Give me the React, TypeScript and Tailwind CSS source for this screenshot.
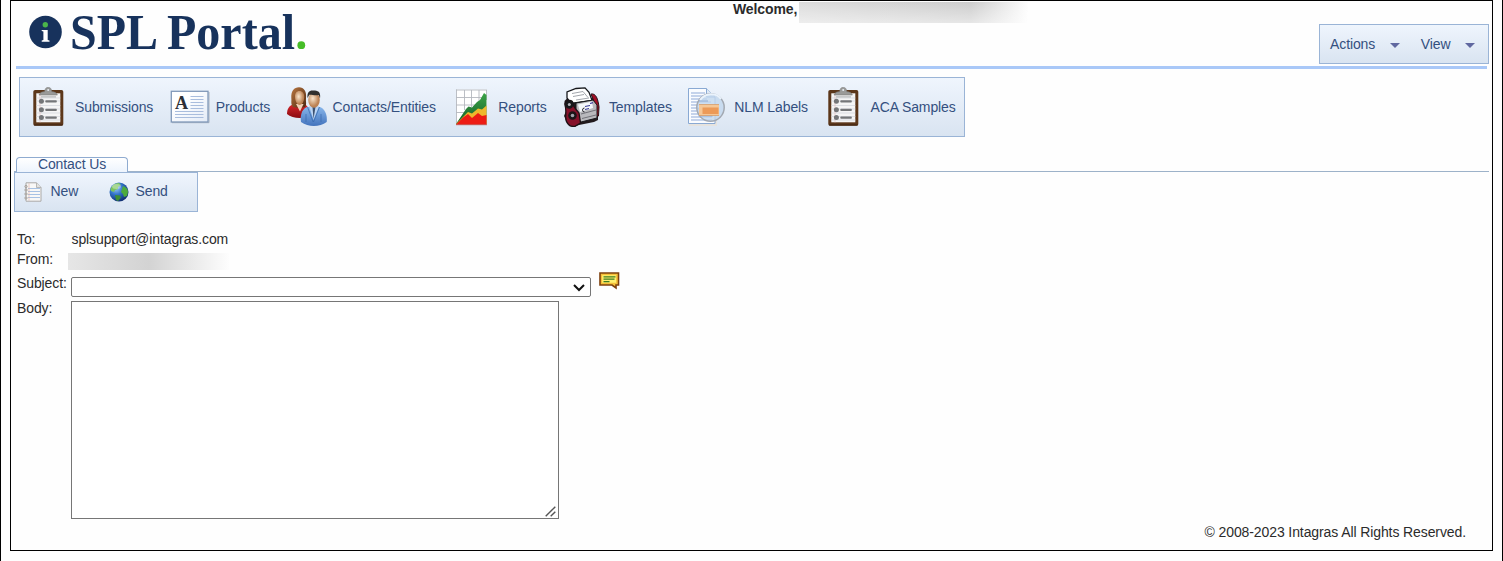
import type { ReactNode } from "react";

function Logo() {
  return (
    <svg className="ml-4 h-[60px] w-[284px] shrink-0" viewBox="27 1 284 60">
      <circle cx="45.5" cy="32" r="16.3" fill="#17325c" />
      <circle cx="45.3" cy="24.8" r="2.7" fill="#4bb54a" />
      <path d="M41.7 30h6v10l1.8.5v1.2h-7.8v-1.2l1.7-.5v-8.4l-1.7-.5z" fill="#fff" />
      <g fill="#17325c" fontFamily="'Liberation Serif', serif" fontWeight="700" fontSize="50" letterSpacing="0">
        <text x="70" y="48.5" textLength="88" lengthAdjust="spacingAndGlyphs">SPL</text>
        <text x="167" y="48.5" textLength="128" lengthAdjust="spacingAndGlyphs">Portal</text>
      </g>
      <circle cx="301.3" cy="45.2" r="3.9" fill="#46bd27" />
    </svg>
  );
}

function ClipboardIcon() {
  return (
    <svg className="size-10 shrink-0" viewBox="0 0 40 40">
      <rect x="4.3" y="3" width="30" height="35.7" rx="1.8" fill="#5c371a" />
      <path d="M5 38h28.6" stroke="#3d2310" />
      <rect x="7.3" y="6.3" width="24" height="29" fill="#f5f5f5" />
      <path d="M7.3 11h24M7.3 14h24M7.3 18.5h24M7.3 22h24M7.3 26h24M7.3 29.5h24M7.3 33h24" stroke="#d3d6dc" strokeWidth=".7" />
      <path d="M11 6.5v29" stroke="#e3b9b9" strokeWidth=".6" />
      <path d="M10 8c1-2.8 3.5-3 5.6-3.4C16.1 1.5 17 .4 19.2.4s3.2 1.1 3.6 4.2c2.1.4 4.6.6 5.6 3.4z" fill="#9a9a98" stroke="#7b7b79" strokeWidth=".6" />
      <circle cx="19.2" cy="3" r="1" fill="#e8edf3" />
      <g fill="#747678">
        <circle cx="12.4" cy="14.2" r="2.5" />
        <circle cx="12.4" cy="22.7" r="2.5" />
        <circle cx="12.4" cy="30.5" r="2.5" />
        <rect x="16.3" y="13.3" width="11.5" height="2.2" rx=".8" />
        <rect x="16.3" y="21.8" width="11.5" height="2.2" rx=".8" />
        <rect x="16.3" y="29.5" width="11.5" height="2.2" rx=".8" />
        <rect x="12" y="9.4" width="15" height="1" fill="#a9abad" />
      </g>
    </svg>
  );
}

function ProductIcon() {
  return (
    <svg className="size-10 shrink-0" viewBox="0 0 40 40">
      <defs>
        <linearGradient id="card" x1="0" y1="0" x2="1" y2="1">
          <stop offset=".3" stopColor="#fff" />
          <stop offset="1" stopColor="#e3ebf7" />
        </linearGradient>
      </defs>
      <path d="M2 35.7h37V5" fill="none" stroke="#aab2be" />
      <rect x="1.3" y="4.3" width="36.7" height="30.7" fill="url(#card)" stroke="#8098b8" strokeWidth="1.3" />
      <text x="5" y="21.5" fontFamily="'Liberation Serif', serif" fontWeight="700" fontSize="19" textLength="13" lengthAdjust="spacingAndGlyphs" fill="#2c2f36">A</text>
      <path d="M20.5 9.500h13M20.5 12.500h13M20.5 15.500h13M20.5 18.500h13M20.5 21.500h13M5 24.500h28.500M5 27.500h28.500M5 30.500h28.500" stroke="#a9bddd" strokeWidth="1.2" />
    </svg>
  );
}

function ContactsIcon() {
  return (
    <svg className="size-10 shrink-0" viewBox="0 0 40 40">
      <defs>
        <linearGradient id="hair" x1="0" y1="0" x2="1" y2="1">
          <stop offset="0" stopColor="#b97842" />
          <stop offset="1" stopColor="#4e260e" />
        </linearGradient>
        <radialGradient id="face" cx=".4" cy=".4">
          <stop offset="0" stopColor="#f9e6cd" />
          <stop offset="1" stopColor="#bd8355" />
        </radialGradient>
        <linearGradient id="red" x1="0" y1="0" x2="0" y2="1">
          <stop offset="0" stopColor="#d8262a" />
          <stop offset="1" stopColor="#8a0b11" />
        </linearGradient>
        <linearGradient id="suit" x1="0" y1="0" x2="0" y2="1">
          <stop offset="0" stopColor="#87b5ea" />
          <stop offset="1" stopColor="#4374bd" />
        </linearGradient>
      </defs>
      <path d="M0 27c0-5 2-8.500 7-10h10c4 1.500 5 5 5 12-6 3-17 2.500-22-2z" fill="url(#red)" />
      <path d="M4.3 11C4 4 7 .3 12 .3s7.8 4 7 11c-.4 4 1 6-1 8.700-3 1-9 1-12 0-2.500-3-1.300-6-1.700-9z" fill="url(#hair)" />
      <path d="M9 17l4 7.500 3.500-7.500z" fill="#f0d0b8" />
      <path d="M8 9.500c0-3.300 1.500-5.500 4.500-5.500s5 2.500 4.700 6.500c-.3 4.500-2.400 7.500-4.500 7.500S8 14.500 8 9.500z" fill="url(#face)" />
      <path d="M14 35c-1-7 1-13 6-15h13c5 2 7.500 8 6.700 15-7 5-18 5.500-25.700 0z" fill="url(#suit)" />
      <path d="M22 19l4.500 14L32 19z" fill="#bcd5f3" />
      <path d="M25.500 20l1 12 2-12z" fill="#3c5171" />
      <path d="M20.500 20l5.700 15M32.500 20l-6 15M19 27v8M34 27v8" fill="none" stroke="#3768ae" strokeWidth=".7" />
      <ellipse cx="27" cy="13" rx="5.800" ry="7.800" fill="url(#face)" />
      <path d="M20.500 11c-.5-6 2-8 6-7.500 4 .3 7.500.5 6.500 8l-1.200-3.500c-4 1-6.500-.5-9.500-.3z" fill="#30302e" />
    </svg>
  );
}

function ReportsIcon() {
  return (
    <svg className="size-10 shrink-0" viewBox="0 0 40 40">
      <defs>
        <linearGradient id="green" x1="0" y1="0" x2="0" y2="1">
          <stop offset="0" stopColor="#3ba447" />
          <stop offset="1" stopColor="#155e27" />
        </linearGradient>
      </defs>
      <rect x="4" y="2.500" width="31" height="35" fill="#fff" />
      <path d="M4.500 2.500v35M12.500 3v20M19.500 3v17M27 3v12M34.500 3v10M4 3h31M4 10.500h27M4 18h20M4 25.500h10" stroke="#b4b8be" strokeWidth=".9" />
      <path d="M4 37L14 22l2.500-2.500 3.500 1 5-5.500 3-2 4-7 2.500 2V37z" fill="url(#green)" />
      <path d="M4 37l12-12 4 1.500 6-5 4 1 4.500-4V37z" fill="#efb82b" />
      <path d="M4 37.500l7-7 5-3.500 4 4 6-5 4 3 4.500-1v9.500z" fill="#ed1c14" />
      <path d="M4 37.700h31" stroke="#b52b22" strokeWidth=".7" />
    </svg>
  );
}

function TemplatesIcon() {
  return (
    <svg className="size-10 shrink-0" viewBox="0 0 40 40">
      <path d="M1.500 14l4-4 4.500 1 2 2 19-2 4 4v18l-4 2-15 3-6 2-5-3-4-8 2-5z" fill="#211a1d" />
      <path d="M28 7c5-1 7 5 8 13l-.5 9-3.500 1V17z" fill="#a10e25" stroke="#231014" />
      <path d="M4 11V5l9-3.500L22 .8l4 4.500 3 8-21 3z" fill="#fff" stroke="#16181c" strokeWidth="1.300" />
      <path d="M9 6.500l11-2 5 6M10 9.500l11-2M13 13l13-2" fill="none" stroke="#8b9098" strokeWidth=".8" />
      <path d="M13 16l17-3 4 5v13l-16 4-5-5z" fill="#b9b9bd" stroke="#17171b" />
      <path d="M15 17.500l14-3 1 6.500-13 4z" fill="#f5f7fb" />
      <path d="M22 19.500l5-1M22 22.500l4-1M27 16.500l3-.8" stroke="#383996" strokeWidth="1.200" />
      <path d="M1.800 17c1-5 8-4.500 8.400 0 .3 4 3 5 5.800 9l1.500 10-5.500 3.300c-5 1-9.300-3-9.300-9 0-5 .8-8-.9-13.300z" fill="#85112a" stroke="#1c1014" strokeWidth="1.300" />
      <circle cx="6.300" cy="17.500" r="4.200" fill="#17171a" />
      <circle cx="6.300" cy="17.500" r="1.500" fill="#b2b2b8" />
      <circle cx="9.500" cy="28.500" r="4.300" fill="#1c1518" />
      <circle cx="9.500" cy="28.500" r="1.800" fill="#a2a2ac" />
      <path d="M18 27l15-4M19 31.500l14-3.500" stroke="#717178" />
      <path d="M21.500 21a2 2 0 100 4" fill="none" stroke="#2a2a30" />
    </svg>
  );
}

function LabelsIcon() {
  return (
    <svg className="size-10 shrink-0" viewBox="0 0 40 40">
      <path d="M1 38h27v-6" fill="none" stroke="#e6e3de" strokeWidth="2" />
      <path d="M.5 1.500h18l8.500 8.500v26.500H.5z" fill="#fafcff" stroke="#89a9d3" />
      <path d="M18.500 1.500V10H27" fill="#dfe9f6" stroke="#89a9d3" />
      <path d="M3 6h14M3 9h14M3 12h16M3 15h20M3 18h20M3 21h20M3 24h20M3 27h20M3 30h21M3 33h21" stroke="#8fa9d8" strokeWidth="1.200" />
      <circle cx="22.500" cy="20.500" r="13.700" fill="#c2d7ed" fillOpacity=".8" stroke="#a3a9b2" strokeWidth="1.500" />
      <path d="M12 13c5-7 16-8 21-1" fill="none" stroke="#eaf3fc" strokeWidth="2" />
      <path d="M11 14h9M10.500 29h14M10.500 22h10" stroke="#91add5" />
      <rect x="11" y="17.500" width="20" height="11" fill="#f5c796" />
      <rect x="14.500" y="20.500" width="16" height="6.500" fill="#ec9a58" />
      <path d="M11 17.500h20M11 28.500h20" stroke="#d5965f" strokeWidth=".7" />
    </svg>
  );
}

function NotebookIcon() {
  return (
    <svg className="h-5 w-5 shrink-0" viewBox="0 0 20 20">
      <path d="M3 .8h10.500L18 5.500v13.700H3z" fill="#f8f8f7" stroke="#aaa9a7" />
      <path d="M13.500.8v4.700H18" fill="#e2e2e1" stroke="#aaa9a7" strokeWidth=".8" />
      <path d="M5 6.500h12M5 9.500h12M5 12.500h12M5 15.500h12" stroke="#a7c2e4" />
      <path d="M6 1.500v17" stroke="#e1aaa0" strokeWidth=".6" />
      <g fill="#c9c4bf" stroke="#999794" strokeWidth=".7">
        <circle cx="3" cy="4.500" r="1.200" />
        <circle cx="3" cy="8" r="1.200" />
        <circle cx="3" cy="12" r="1.200" />
        <circle cx="3" cy="16" r="1.200" />
      </g>
    </svg>
  );
}

function GlobeIcon() {
  return (
    <svg className="h-5 w-5 shrink-0" viewBox="0 0 20 20">
      <defs>
        <radialGradient id="ocean" cx=".35" cy=".3" r=".75">
          <stop offset="0" stopColor="#9cc8f7" />
          <stop offset=".45" stopColor="#3274c9" />
          <stop offset="1" stopColor="#0e2a6c" />
        </radialGradient>
      </defs>
      <circle cx="10" cy="10" r="9.500" fill="url(#ocean)" />
      <path d="M1.500 7C3 3 6 1 10 .9l2 2.100-3 2 0 2-3 1-1 2-3-1z" fill="#7cc45c" />
      <path d="M14 4c3 1 5 3 5 6l-1 4-3 1-1-3-2-2 1-3z" fill="#4dab3c" />
      <path d="M6 13l5 .5 1 2-3 3.500-2-1z" fill="#3d8e35" />
      <ellipse cx="7.500" cy="4.500" rx="4.500" ry="2.500" fill="#fff" opacity=".35" />
    </svg>
  );
}

function NoteIcon() {
  return (
    <svg className="ml-2 -mt-px h-[18px] w-[21px] shrink-0" viewBox="0 0 21 18">
      <path d="M1 1h18.500v12h-2.500v3l-4-3H1z" fill="#f6c93c" stroke="#7d3f0c" strokeWidth="1.600" />
      <path d="M2.700 2.700h15v8.600h-15z" fill="#fff06e" stroke="#f4b32e" strokeWidth=".8" />
      <path d="M4.500 4.800h12M4.500 7.200h11M4.500 9.600h6" stroke="#3f7d22" strokeWidth="1.300" />
    </svg>
  );
}

function NavItem({ icon, label }: { icon: ReactNode; label: string }) {
  return (
    <div className="flex items-center gap-[6px]">
      {icon}
      <span>{label}</span>
    </div>
  );
}

function MenuItem({ label }: { label: string }) {
  return (
    <div className="flex items-center gap-[15px]">
      <span>{label}</span>
      <svg className="mt-[3px] h-[5px] w-[10px]" viewBox="0 0 10 5">
        <path d="M0 0h10L5 5z" fill="#6068a0" />
      </svg>
    </div>
  );
}

const bar = "border border-[#9ab4d6] bg-linear-to-b from-[#eff5fd] to-[#d9e4f1] text-[#34507f]";

export default function App() {
  return (
    <div className="h-[561px] w-[1503px] border-x border-black bg-[#fefefe] px-[9px] font-['Liberation_Sans',Arial,sans-serif] text-[14px] leading-5 tracking-[-0.1px] text-[#2b2b2b]">
      <div className="flex h-[551px] flex-col border border-black">
        <header className="flex h-[65px] shrink-0">
          <Logo />
          <div className="ml-[422px] flex">
            <b className="-mt-[2px] w-[66px] whitespace-nowrap">Welcome,</b>
            <div className="mt-px h-[21px] w-[229px] bg-linear-to-r from-[#dcdcdc] via-[#cdcdcd] via-75% to-[#fdfdfd]">
              <div className="h-full bg-linear-to-b from-transparent to-white/50" />
            </div>
          </div>
          <div className={`mt-[23px] mr-[3px] ml-auto flex h-10 w-[170px] items-center gap-[20.500px] pl-[10px] ${bar}`}>
            <MenuItem label="Actions" />
            <MenuItem label="View" />
          </div>
        </header>
        <div className="mx-[5px] h-[3px] shrink-0 bg-[#a9c8f8]" />

        <nav className={`mt-2 ml-2 flex h-[60px] w-[946px] shrink-0 items-center gap-[16.4px] pl-[9px] ${bar}`}>
          <NavItem icon={<ClipboardIcon />} label="Submissions" />
          <NavItem icon={<ProductIcon />} label="Products" />
          <NavItem icon={<ContactsIcon />} label="Contacts/Entities" />
          <NavItem icon={<ReportsIcon />} label="Reports" />
          <NavItem icon={<TemplatesIcon />} label="Templates" />
          <NavItem icon={<LabelsIcon />} label="NLM Labels" />
          <NavItem icon={<ClipboardIcon />} label="ACA Samples" />
        </nav>

        <div className="mt-5 mr-[3px] ml-[3px] flex h-[15px] shrink-0 border-b border-[#9db2c9] pl-[2px]">
          <div className="h-[15px] w-[112px] rounded-t-[4px] border border-b-0 border-[#8fabd0] bg-linear-to-b from-white to-[#edf4fd] text-center leading-[13px] text-[#34507f]">
            Contact Us
          </div>
        </div>
        <div className={`ml-[3px] flex h-10 w-[184px] shrink-0 items-center pl-2 ${bar}`}>
          <NotebookIcon />
          <span className="-mt-[2px] ml-[7.5px] w-[58.5px]">New</span>
          <GlobeIcon />
          <span className="-mt-[2px] ml-[6.5px]">Send</span>
        </div>

        <form className="mt-[17px] ml-[6px] flex flex-col">
          <div className="flex h-5">
            <span className="w-[54.5px]">To:</span>
            <span>splsupport@intagras.com</span>
          </div>
          <div className="flex h-5">
            <span className="w-[51px]">From:</span>
            <div className="mt-[4px] h-[17px] w-[161px] bg-linear-to-r from-[#e6e6e6] via-[#d3d3d3] to-[#fdfdfd]" />
          </div>
          <div className="mt-1 flex h-[25px]">
            <label className="w-[54px] shrink-0">Subject:</label>
            <div className="mt-1 flex h-5 w-[520px] items-center justify-end rounded-[2px] border border-[#767676] bg-white pr-[5px]">
              <svg className="mt-px h-[8px] w-[12px]" viewBox="0 0 12 8">
                <path d="M1 1l5 5 5-5" fill="none" stroke="#111" strokeWidth="2" />
              </svg>
            </div>
            <NoteIcon />
          </div>
          <div className="flex">
            <label className="w-[54px] shrink-0">Body:</label>
            <div className="relative mt-[3px] h-[218px] w-[488px]">
              <textarea className="block size-full resize-none border border-[#767676] bg-white" />
              <svg className="pointer-events-none absolute right-[3px] bottom-[2px] size-[11px]" viewBox="0 0 11 11">
                <path d="M.7 10.3l9.6-9.6M5.700 10.3l4.6-4.6" stroke="#555" strokeWidth="1.4" />
              </svg>
            </div>
          </div>
        </form>
        <footer className="mr-[26px] mt-[3px] text-right">© 2008-2023 Intagras All Rights Reserved.</footer>
      </div>
    </div>
  );
}
